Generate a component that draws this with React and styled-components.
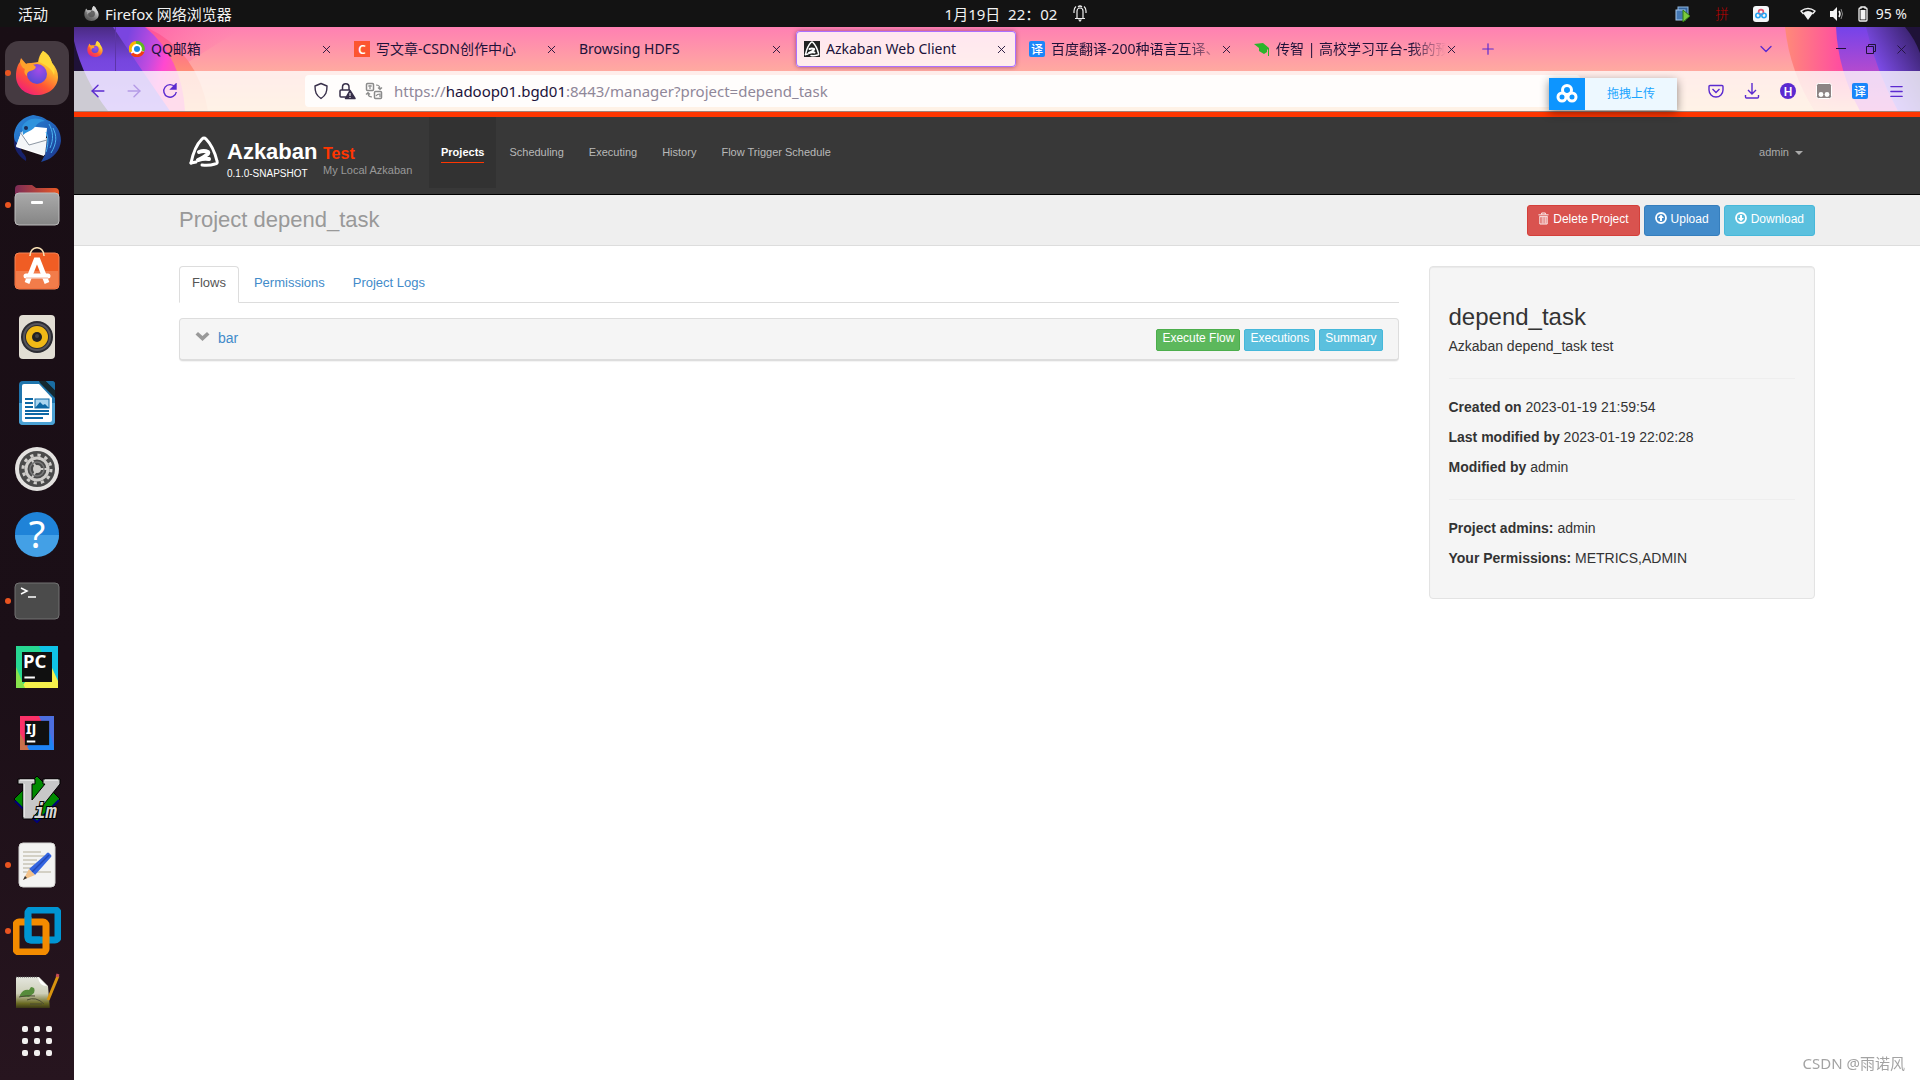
import React, { useState } from 'react';
import styled, { createGlobalStyle, css } from 'styled-components';
import {
  ArrowLeft, ArrowRight, ChevronDown, Menu, Plus, X,
} from 'lucide-react';

const GlobalStyle = createGlobalStyle`
  * { box-sizing: border-box; }
  body {
    margin: 0;
    background: #fff;
    color: #333;
    font-family: "Liberation Sans", Arial, "Noto Sans CJK SC", sans-serif;
    font-size: 14px;
    line-height: 20px;
  }
  button { font: inherit; color: inherit; border: 0; background: none; padding: 0; cursor: pointer; }
  a { text-decoration: none; }
  ul { list-style: none; margin: 0; padding: 0; }
  svg { display: block; flex: none; }
`;

const uiFont = css`
  font-family: "Noto Sans", "Noto Sans CJK SC", sans-serif;
`;

/* ---------- desktop ---------- */

const Desktop = styled.div`
  display: grid;
  grid-template: 27px 1fr / 74px 1fr;
  height: 100vh;
`;

const TopBar = styled.header`
  ${uiFont}
  grid-column: 1 / -1;
  display: flex;
  align-items: center;
  justify-content: space-between;
  background: #131313;
  color: #f2f2f2;
  font-size: 15px;
`;

const TopGroup = styled.div`
  display: flex;
  align-items: center;
  flex: 1 1 0;
  justify-content: ${(props) => (props.$end ? 'flex-end' : 'flex-start')};
  gap: ${(props) => props.$gap || 0}px;
  padding: 0 ${(props) => (props.$end ? 13 : 0)}px 0 ${(props) => (props.$end ? 0 : 18)}px;
`;

const TopButton = styled.button`
  display: flex;
  align-items: center;
  gap: ${(props) => props.$gap || 6}px;
  white-space: nowrap;
`;

const Clock = styled(TopButton)`
  margin-left: 107px;
`;

const Charge = styled(TopButton)`
  margin-left: 8px;
  font-size: 14px;
`;

const Tray = styled.div`
  display: flex;
  align-items: center;
  gap: 22px;
  margin-right: 31px;
`;

const Dock = styled.nav`
  display: flex;
  flex-direction: column;
  min-height: 0;
  padding-top: 14px;
  background: linear-gradient(#190e15, #1b0f17 60%, #27151f);
`;

const DockList = styled.ul`
  flex: 1;
  display: flex;
  flex-direction: column;
  align-items: center;
  gap: 2px;
  min-height: 0;
  overflow: hidden;
`;

const DockButton = styled.button`
  position: relative;
  display: grid;
  place-items: center;
  width: 64px;
  height: 64px;
  border-radius: 14px;
  background: ${(props) => (props.$active ? '#453a41' : 'none')};
`;

const RunningDot = styled.span`
  position: absolute;
  left: 0;
  top: 29px;
  width: 6px;
  height: 6px;
  border-radius: 50%;
  background: #e95420;
`;

const AppsButton = styled.button`
  display: grid;
  place-items: center;
  height: 72px;
  padding-bottom: 6px;
`;

/* ---------- browser chrome ---------- */

const Browser = styled.main`
  display: flex;
  flex-direction: column;
  min-width: 0;
`;

const Chrome = styled.div`
  ${uiFont}
  position: relative;
  z-index: 1;
  background: linear-gradient(#ff80b3, #ffaaa0 44px, #ffc58e 84px);
  color: #20123a;
`;

const Art = styled.svg`
  position: absolute;
  top: 0;
  ${(props) => (props.$right ? 'right: 0' : 'left: 0')};
`;

const TabStrip = styled.div`
  position: relative;
  display: flex;
  align-items: center;
  gap: 5px;
  height: 44px;
`;

const PinnedTab = styled.button`
  display: grid;
  place-items: center;
  width: 42px;
  height: 44px;
  border-right: 1px solid #5c35a8;
`;

const Tab = styled.div`
  display: flex;
  align-items: center;
  gap: 6px;
  flex: 0 1 220px;
  min-width: 0;
  height: 36px;
  padding: 0 8px;
  border-radius: 4px;
  font-size: 14px;
  ${(props) => props.$active && css`
    background: rgba(255, 255, 255, .8);
    box-shadow: 0 0 0 1px #ac70ff inset, 0 0 4px rgba(90, 30, 90, .6);
  `}
`;

const TabLabel = styled.button`
  flex: 1;
  min-width: 0;
  overflow: hidden;
  text-align: left;
  white-space: nowrap;
  ${(props) => props.$fade && css`
    margin-right: -8px;
    mask-image: linear-gradient(to right, #000 calc(100% - 36px), transparent);
  `}
`;

const IconButton = styled.button`
  display: grid;
  place-items: center;
  width: ${(props) => props.$w || 14}px;
  height: 24px;
  color: ${(props) => props.$color || '#20123a'};
`;

const WindowTools = styled.div`
  display: flex;
  align-items: center;
  margin-left: auto;
  padding-right: 4px;
`;

const WindowButtons = styled.div`
  display: flex;
  margin-left: 42px;
`;

const NavBar = styled.div`
  position: relative;
  display: flex;
  align-items: center;
  height: 41px;
  padding: 0 6px;
  background: rgba(255, 255, 255, .78);
  border-bottom: 1px solid #a08078;
`;

const UrlBox = styled.div`
  display: flex;
  align-items: center;
  gap: 9px;
  flex: 1;
  height: 32px;
  margin: 0 118px 0 117px;
  padding: 0 8px;
  border-radius: 4px;
  background: rgba(255, 255, 255, .85);
`;

const Url = styled.a`
  margin-left: 2px;
  font-size: 15px;
  color: #8f8799;
  b { font-weight: 400; color: #20123a; }
`;

const UploadWidget = styled.button`
  position: absolute;
  right: 243px;
  top: 51px;
  display: flex;
  align-items: center;
  width: 128px;
  height: 32px;
  background: #edf8ff;
  box-shadow: 0 3px 10px rgba(0, 0, 0, .45);
  color: #1aa5ff;
  font-size: 12px;
  span { flex: 1; text-align: center; }
`;

/* ---------- Azkaban page ---------- */

const Header = styled.header`
  display: flex;
  height: 83px;
  padding: 0 105px;
  border-top: 5px solid #ff3601;
  border-bottom: 1px solid #000;
  background: #383838;
`;

const Brand = styled.div`
  display: flex;
  gap: 7px;
  width: 250px;
  padding: 19px 0 0 9px;
`;

const BrandText = styled.div`
  display: grid;
  grid-template-columns: 88px auto;
  column-gap: 8px;
  align-content: start;
  color: #fff;
  white-space: nowrap;
  padding-top: 3px;
`;

const Name = styled.a`
  font-size: 22px;
  line-height: 26px;
  font-weight: 700;
  color: #fff;
`;

const Instance = styled.span`
  font-size: 16px;
  line-height: 29px;
  height: 26px;
  font-weight: 700;
  color: #ff3601;
`;

const Small = styled.span`
  font-size: ${(props) => (props.$muted ? 11 : 10)}px;
  line-height: ${(props) => (props.$muted ? 11 : 17)}px;
  color: ${(props) => (props.$muted ? '#999' : '#fff')};
`;

const Menubar = styled.nav`
  display: flex;
  align-items: flex-start;
  flex: 1;
  gap: 1px;
`;

const MenuItem = styled.a`
  height: 71px;
  padding: 27px 12px 0;
  font-size: 11px;
  line-height: 17px;
  color: #b8b8b8;
  span { display: block; height: 19px; }
  ${(props) => props.$active && css`
    background: #323232;
    color: #fff;
    font-weight: 700;
    span { border-bottom: 1px solid #ff3601; }
  `}
`;

const UserMenu = styled.button`
  display: flex;
  align-items: center;
  gap: 6px;
  margin: 27px 12px 0 auto;
  font-size: 11px;
  line-height: 17px;
  color: #aaa;
`;

const Caret = styled.i`
  border: 4px solid transparent;
  border-top-color: currentColor;
  border-bottom: 0;
`;

const TitleBar = styled.section`
  display: flex;
  justify-content: space-between;
  height: 51px;
  padding: 10px 105px 0;
  border-bottom: 1px solid #ddd;
  background: #efefef;
  h1 {
    margin: 0;
    font-size: 22px;
    line-height: 30px;
    font-weight: 400;
    color: #999;
  }
`;

const Actions = styled.div`
  display: flex;
  align-items: flex-start;
  gap: 4px;
`;

const tones = {
  danger: ['#d9534f', '#d43f3a'],
  primary: ['#428bca', '#357ebd'],
  info: ['#5bc0de', '#46b8da'],
  success: ['#5cb85c', '#4cae4c'],
};

const Button = styled.button`
  display: flex;
  align-items: flex-start;
  gap: 4px;
  height: ${(props) => (props.$small ? 22 : 31)}px;
  padding: ${(props) => (props.$small ? '0 5px' : '4px 10px')};
  border: 1px solid ${(props) => tones[props.$tone][1]};
  border-radius: ${(props) => (props.$small ? 2 : 3)}px;
  background: ${(props) => tones[props.$tone][0]};
  color: #fff;
  font-size: 12px;
  line-height: ${(props) => (props.$small ? 16 : 18)}px;
  white-space: nowrap;
  svg { margin-top: 2px; }
`;

const Row = styled.div`
  display: flex;
  padding: 20px 90px 0;
`;

const Column = styled.div`
  width: ${(props) => props.$width};
  padding: 0 15px;
`;

const PageTabs = styled.ul`
  display: flex;
  gap: 2px;
  height: 37px;
  margin-bottom: 15px;
  border-bottom: 1px solid #ddd;
`;

const PageTab = styled.a`
  display: block;
  height: 37px;
  padding: 6px 12px;
  border: 1px solid transparent;
  border-radius: 4px 4px 0 0;
  font-size: 13px;
  line-height: 19px;
  color: #428bca;
  ${(props) => props.$active && css`
    border-color: #ddd #ddd #fff;
    background: #fff;
    color: #555;
  `}
`;

const FlowPanel = styled.section`
  display: flex;
  justify-content: space-between;
  height: 43px;
  padding: 10px 15px;
  border: 1px solid #ddd;
  border-bottom-width: 2px;
  border-radius: 4px;
  background: #f5f5f5;
  box-shadow: 0 1px 1px rgba(0, 0, 0, .05);
`;

const FlowLink = styled.a`
  display: flex;
  gap: 8px;
  height: 18px;
  line-height: 18px;
  color: #428bca;
`;

const Well = styled.aside`
  padding: 36px 19px 20px;
  border: 1px solid #e3e3e3;
  border-radius: 4px;
  background: #f5f5f5;
  box-shadow: inset 0 1px 1px rgba(0, 0, 0, .05);
  h2 {
    margin: 0 0 6px;
    font-size: 24px;
    line-height: 27px;
    font-weight: 400;
  }
  p { margin: 0 0 10px; }
  hr {
    margin: 22px 0 18px;
    border: 0;
    border-top: 1px solid #eee;
  }
`;

const Watermark = styled.div`
  ${uiFont}
  position: fixed;
  right: 15px;
  bottom: 7px;
  font-size: 15px;
  color: #a3a3a3;
`;

/* ---------- drawings ---------- */

const GrayFilter = styled.span`
  filter: grayscale(1);
`;

function Firefox({ size }) {
  return (
    <svg width={size} height={size} viewBox="0 0 44 44">
      <defs>
        <linearGradient id="ffBody" x1=".85" y1="0" x2=".2" y2="1">
          <stop offset="0" stopColor="#fff44f" />
          <stop offset=".35" stopColor="#ffb02e" />
          <stop offset=".65" stopColor="#ff5634" />
          <stop offset="1" stopColor="#f0197f" />
        </linearGradient>
        <radialGradient id="ffGlobe" cx=".6" cy=".3" r=".7">
          <stop offset="0" stopColor="#a24be8" />
          <stop offset="1" stopColor="#5b4bd6" />
        </radialGradient>
      </defs>
      <path fill="url(#ffBody)" d="M28 0c7 4 8 9 9 12 4 4 6 9 6 14 0 10-9 18-21 18C10 44 1 36 1 25 1 18 3 13 5 11l1-4 5 6c2-1 3-1 5-1 3 0 5-1 7-1 1-5 2-8 5-11z" />
      <circle cx="22" cy="23" r="10" fill="url(#ffGlobe)" />
      <path fill="#ffa22b" d="M5 11l1-3 5 5c4-1 7 0 9 2 2 1 0 4-5 5-3 1-3 3-3 5-3-2-3-5-2-7-3-1-4-4-5-7z" />
      <path fill="#ffd83a" d="M24 11c1-5 2-8 4-11 7 4 8 9 9 12 3 3 3 9 2 12-1-3-3-6-6-8-3-2-6-4-9-5z" />
    </svg>
  );
}

function Thunderbird() {
  return (
    <svg width="48" height="48" viewBox="0 0 48 48">
      <defs>
        <linearGradient id="tb" x1="0" y1="0" x2="1" y2="1">
          <stop offset="0" stopColor="#2b87d8" />
          <stop offset=".5" stopColor="#2266bd" />
          <stop offset="1" stopColor="#1a2f86" />
        </linearGradient>
      </defs>
      <path fill="#17216a" d="M1 24c-1 9 4 17 12 22 1-3-1-6-4-9L3 20z" />
      <path fill="url(#tb)" d="M2 15C4 8 10 2 20 0c5 1 9 1 14 5 9 3 14 11 14 21-1 9-7 17-17 20l-3 1 4-7 2-18-8-8-16 4-6 10C1 26 0 21 2 15z" />
      <path fill="#fff" d="M8 18l6-7 20 2-3 28-28-9z" />
      <path fill="#f4f6f8" d="M8 18l8 12 18-7-2 17-29-9z" />
      <path fill="none" stroke="#8f99a5" d="M7 17l9 13 18-5" />
      <path fill="#2f93dd" d="M9 12C13 4 22 1 32 6c-5 0-8 3-11 7-3 3-8 4-11 7z" />
      <path fill="none" stroke="#4db4ef" d="M36 9c4 7 5 15 1 24M40 13c4 8 4 15-2 25M33 17c3 7 2 14 0 20" />
      <circle cx="13" cy="13" r="2" fill="#1b2b55" />
    </svg>
  );
}

function Files() {
  return (
    <svg width="48" height="48" viewBox="0 0 48 48">
      <defs>
        <linearGradient id="fl">
          <stop offset="0" stopColor="#7b2b56" />
          <stop offset="1" stopColor="#e95a25" />
        </linearGradient>
        <linearGradient id="fg" x2="0" y2="1">
          <stop offset="0" stopColor="#aaa" />
          <stop offset="1" stopColor="#858585" />
        </linearGradient>
      </defs>
      <path fill="url(#fl)" d="M2 8q0-4 4-4h13l4 3h19q4 0 4 4v12H2z" />
      <rect x="2" y="12" width="44" height="32" rx="4" fill="url(#fg)" stroke="#bdbdbd" />
      <rect x="18" y="20" width="12" height="3" rx="1" fill="#fff" />
    </svg>
  );
}

function Software() {
  return (
    <svg width="48" height="48" viewBox="0 0 48 48">
      <rect x="2" y="6" width="44" height="36" rx="4" fill="#f05d24" stroke="#f58456" />
      <path fill="#f27c4a" d="M3 24h42v14q0 3-3 3H6q-3 0-3-3z" />
      <path fill="none" stroke="#f7dfb4" strokeWidth="1.6" d="M17 9C17-2 31-2 31 9" />
      <path fill="none" stroke="#fff" strokeWidth="5" d="M14 36l9-23h2l9 23" />
      <path stroke="#fff" strokeWidth="5" strokeLinecap="round" d="M13 29h22" />
      <path stroke="#f0a080" strokeWidth=".8" d="M13 31h22" />
    </svg>
  );
}

function Music() {
  return (
    <svg width="48" height="48" viewBox="0 0 48 48">
      <rect x="6" y="2" width="36" height="44" rx="4" fill="#e2ded4" />
      <circle cx="24" cy="24" r="16" fill="#2b2b31" />
      <circle cx="24" cy="24" r="13" fill="none" stroke="#55555c" strokeWidth="2" />
      <circle cx="24" cy="24" r="11" fill="#f0b916" />
      <circle cx="24" cy="24" r="5" fill="#222" />
      <circle cx="24" cy="23" r="2" fill="#444" />
    </svg>
  );
}

function Writer() {
  return (
    <svg width="48" height="48" viewBox="0 0 48 48">
      <rect x="6" y="2" width="36" height="44" rx="4" fill="#1f75ad" />
      <path fill="#4ba2d4" d="M6 24h36v18q0 4-4 4H10q-4 0-4-4z" />
      <path fill="#fff" d="M9 7q0-2 2-2h15l13 14v22q0 2-2 2H11q-2 0-2-2z" />
      <path fill="#14272f" d="M26 2h7l9 9v8L27 4z" />
      <path fill="#1a6da3" d="M33 2h6q3 0 3 3v6z" />
      <path stroke="#0d68a5" strokeWidth="2" d="M12 20h8M12 24h8M12 28h8M12 32h24M12 35h24M12 39h18" />
      <rect x="22" y="20" width="14" height="9" fill="#a9d5f0" stroke="#0d68a5" />
      <path fill="#0d68a5" d="M22 29l5-6 3 3 2-1 4 4z" />
    </svg>
  );
}

function Settings() {
  return (
    <svg width="48" height="48" viewBox="0 0 48 48">
      <circle cx="24" cy="24" r="22" fill="#e4e2e0" />
      <circle cx="24" cy="24" r="18" fill="#4a4a4a" />
      <circle cx="24" cy="24" r="14" fill="none" stroke="#cfcdca" strokeWidth="3" strokeDasharray="3.3 4.03" />
      <circle cx="24" cy="24" r="11" fill="none" stroke="#cfcdca" strokeWidth="3" />
      <path stroke="#cfcdca" strokeWidth="2" d="M24 24h10M24 24l-5 9M24 24l-5-9" />
      <circle cx="24" cy="24" r="7" fill="none" stroke="#777" strokeWidth="1.5" />
      <circle cx="24" cy="24" r="4" fill="#cfcdca" />
    </svg>
  );
}

function Help() {
  return (
    <svg width="48" height="48" viewBox="0 0 48 48">
      <circle cx="24" cy="23" r="22" fill="#1f83d8" />
      <path fill="#43a0e6" d="M2 24a22 22 0 0 0 44 0z" />
      <text x="24" y="37" textAnchor="middle" fontFamily="Noto Sans" fontSize="38" fill="#fff">?</text>
    </svg>
  );
}

function Terminal() {
  return (
    <svg width="48" height="48" viewBox="0 0 48 48">
      <rect x="2" y="6" width="44" height="36" rx="4" fill="#4b4b4b" stroke="#737373" />
      <path fill="none" stroke="#fff" strokeWidth="1.5" d="M8 11l6 3-6 3M15 20h8" />
    </svg>
  );
}

function JetBrains({ label, colors, size }) {
  const o = 24 - size / 2;
  const end = 24 + size / 2;
  return (
    <svg width="48" height="48" viewBox="0 0 48 48">
      <rect x={o} y={o} width={size} height={size} fill={colors[0]} />
      <path fill={colors[1]} d={`M26 ${o}H${end}V${end}z`} />
      <path fill={colors[2]} d={`M${o + 4} ${end}L34 14L${end} 38V${end}z`} />
      <path fill={colors[3]} d={`M${o} 24l9 ${size / 2}h-9z`} />
      <rect x={o + size / 7} y={o + size / 7} width={size * 5 / 7} height={size * 5 / 7} fill="#101010" />
      <text x={o + size / 6} y="25" fontFamily="Noto Sans" fontWeight="700" fontSize={size * 0.44} fill="#fff">{label}</text>
      <path stroke="#fff" strokeWidth="2" d={`M${o + size / 5} ${24 + size / 4}h${size / 4}`} />
    </svg>
  );
}

function Vim() {
  return (
    <svg width="48" height="48" viewBox="0 0 48 48">
      <path fill="#008a00" stroke="#000" d="M24 1l23 23-23 23L1 24z" />
      <path stroke="#00007a" strokeWidth="2" fill="none" d="M2 26l22 21 22-22" />
      <path fill="#c8c8c8" stroke="#000" d="M5 4h17v5h-3v16L32 9h-2V4h17v5L19 44h-9V9H5z" />
      <path stroke="#fff" fill="none" d="M7 5h14M32 5h13M11 9v33" />
      <text x="21" y="43" fontFamily="DejaVu Sans Mono" fontStyle="italic" fontWeight="700" fontSize="19" fill="#d6d6d6" stroke="#000" strokeWidth="2" paintOrder="stroke">im</text>
    </svg>
  );
}

function TextEditor() {
  return (
    <svg width="48" height="48" viewBox="0 0 48 48">
      <rect x="6" y="2" width="36" height="44" rx="4" fill="#f3f3f2" stroke="#d6d6d4" />
      <path stroke="#c9c5b6" strokeWidth="1.5" d="M10 11h18M10 15h22M10 19h14M10 23h12M10 27h12M10 31h28" />
      <path fill="#3465e0" d="M31 15l3-3q1-1 2 0l2 2q1 1 0 2L22 34l-6-6z" />
      <path stroke="#2348b5" strokeWidth="1.5" d="M19 31l17-17" />
      <path fill="#f2c189" d="M16 28l6 6-12 5z" />
      <path fill="#333" d="M12 35l2 2-4 2z" />
    </svg>
  );
}

function Vmware() {
  return (
    <svg width="48" height="48" viewBox="0 0 48 48" fill="none" strokeWidth="7">
      <rect x="15" y="3" width="30" height="30" rx="3" stroke="#0095d3" />
      <rect x="3" y="15" width="30" height="30" rx="3" stroke="#f38b00" />
      <path stroke="#0095d3" d="M15 10v20q0 3 3 3h9" />
    </svg>
  );
}

function Notepadqq() {
  return (
    <svg width="48" height="48" viewBox="0 0 48 48">
      <defs>
        <linearGradient id="nq" x2="0" y2="1">
          <stop offset="0" stopColor="#e4e6de" />
          <stop offset=".5" stopColor="#cdceb8" />
          <stop offset=".8" stopColor="#6a6a22" />
          <stop offset="1" stopColor="#25200f" />
        </linearGradient>
      </defs>
      <path fill="url(#nq)" d="M3 4h23l9 9 2 24H3z" />
      <path stroke="#555" strokeDasharray="1 1" d="M3 4h22" />
      <path fill="#fff" d="M25 4l9 9q-8 0-9-9z" />
      <path fill="#568b3b" d="M7 22q3-6 9-5l2-3q5 0 3 6l-5 4H7z" />
      <path fill="none" stroke="#4b4b35" d="M6 24q7-2 16-1M14 27q9-4 17 4M17 31h12" />
      <path stroke="#d8940f" strokeWidth="3" d="M35 27L45 3" />
      <path stroke="#c64b55" strokeWidth="3" d="M44 4l1-3" />
    </svg>
  );
}

function AppsGrid() {
  return (
    <svg width="30" height="30" viewBox="0 0 30 30" fill="#f2f0ef">
      {[0, 12, 24].map((y) => [0, 12, 24].map((x) => (
        <rect key={`${x}-${y}`} x={x} y={y} width="6" height="6" rx="2" />
      )))}
    </svg>
  );
}

function CloudBadge() {
  return (
    <svg width="36" height="32" viewBox="0 0 36 32">
      <rect width="36" height="32" fill="#0d95ff" />
      <g fill="none" stroke="#fff" strokeWidth="3">
        <circle cx="18" cy="12" r="4.5" />
        <circle cx="13" cy="19" r="4" />
        <circle cx="23" cy="19" r="4" />
      </g>
    </svg>
  );
}

function CloudTray() {
  return (
    <svg width="16" height="16" viewBox="0 0 16 16">
      <rect width="16" height="16" rx="3" fill="#f4f6f8" />
      <g fill="none" strokeWidth="1.6">
        <circle cx="8" cy="6" r="2.4" stroke="#e4506a" />
        <circle cx="5" cy="9.5" r="2.2" stroke="#25a4f5" />
        <circle cx="11" cy="9.5" r="2.2" stroke="#25a4f5" />
      </g>
    </svg>
  );
}

function GlyphIcon({ label, bg, color = '#fff', size = 16, radius = 2, weight = 500 }) {
  return (
    <svg width={size} height={size} viewBox="0 0 16 16">
      <rect width="16" height="16" rx={radius} fill={bg} />
      <text x="8" y="12.5" textAnchor="middle" fontSize="12" fontWeight={weight} fontFamily="Noto Sans, Noto Sans CJK SC" fill={color}>{label}</text>
    </svg>
  );
}

function AzkabanMark({ size, bg }) {
  return (
    <svg width={size} height={size} viewBox="0 0 32 32" fill="none" stroke="#fff" strokeLinejoin="round" strokeLinecap="round">
      {bg && <rect width="32" height="32" fill="#222" stroke="none" />}
      <path strokeWidth="3" d="M3 27C5 17 9 8 14 3q2-2 4 0c5 5 9 14 11 22q1 3-2 3-6 2-13 1" />
      <path strokeWidth="3" d="M3 27l5-1" />
      <path strokeWidth="4" d="M11 16q5-2 9 0 2 2-10 8 6-2 11-1" />
    </svg>
  );
}

function QQMail() {
  return (
    <svg width="16" height="16" viewBox="0 0 16 16" fill="none" strokeWidth="3">
      <circle cx="8" cy="8" r="7" fill="#fff" stroke="none" />
      <path stroke="#f7b500" d="M2 11A6.500 6.500 0 0 1 7 1.500" />
      <path stroke="#5fb91e" d="M7 1.500A6.500 6.500 0 0 1 14 10" />
      <path stroke="#f23c12" d="M14 10.500A6.500 6.500 0 0 1 3 12.500" />
      <circle cx="8" cy="8" r="3" fill="#1a86e0" stroke="none" />
    </svg>
  );
}

function Cap() {
  return (
    <svg width="16" height="16" viewBox="0 0 16 16" fill="#2bb52b">
      <path d="M0 3l9-1 6 5v8h-1V9l-1-1v3l-3 2-5-3V7z" />
    </svg>
  );
}

function Reload() {
  return (
    <svg width="16" height="16" viewBox="0 0 16 16" fill="none" stroke="#5b2ad0" strokeWidth="1.4">
      <path d="M13 4A6.300 6.300 0 1 0 14.300 9" />
      <path fill="#5b2ad0" d="M14 1v5H9z" />
    </svg>
  );
}

function Shield() {
  return (
    <svg width="16" height="18" viewBox="0 0 16 18" fill="none" stroke="#38304a" strokeWidth="1.4">
      <path d="M8 1.500l6 2.500c0 6-1 9-6 12.500C3 13 2 10 2 4z" strokeLinejoin="round" />
    </svg>
  );
}

function Lock() {
  return (
    <svg width="18" height="18" viewBox="0 0 18 18" fill="none" stroke="#38304a" strokeWidth="1.5">
      <path d="M4.500 8V5a3 3 0 0 1 6.500 0v3M10 15H3q-1 0-1-1V9q0-1 1-1h9" />
      <path fill="#38304a" d="M12 8.500l5 8H7.500z" strokeLinejoin="round" />
      <path stroke="#fff" strokeWidth="1" d="M12 11v3M12 15v1" />
    </svg>
  );
}

function Translate() {
  return (
    <svg width="18" height="18" viewBox="0 0 18 18" fill="none" stroke="#8b8b8b" strokeWidth="1.5">
      <rect x="1.5" y="1.5" width="7" height="7" rx="1" />
      <rect x="9.5" y="9.5" width="7" height="7" rx="1" />
      <path d="M3 4h4M5 3v4M11 14q1-2 4-2v3M11 3q4 0 4 4M13 5.500l2 2 2-2M7 15q-4 0-4-4M1 12.500l2-2 2 2" strokeWidth="1.2" />
    </svg>
  );
}

function Pocket() {
  return (
    <svg width="16" height="16" viewBox="0 0 16 16" fill="none" stroke="#5b2ad0" strokeWidth="1.4">
      <path d="M2 2.500h12q1 0 1 1V7a7 7 0 0 1-14 0V3.500q0-1 1-1z" />
      <path d="M4.500 6L8 9.500 11.500 6" />
    </svg>
  );
}

function DownloadTray() {
  return (
    <svg width="16" height="16" viewBox="0 0 16 16" fill="none" stroke="#5b2ad0" strokeWidth="1.4">
      <path d="M8 0v11M4 7l4 4 4-4M1.500 12v2q0 1 1 1h11q1 0 1-1v-2" />
    </svg>
  );
}

function Monkey() {
  return (
    <svg width="16" height="16" viewBox="0 0 16 16">
      <rect x=".5" y=".5" width="15" height="15" rx="2" fill="#8d8585" stroke="#fff" />
      <circle cx="5" cy="11.5" r="2.4" fill="#fff" />
      <circle cx="11" cy="11.5" r="2.4" fill="#fff" />
    </svg>
  );
}

function Trash() {
  return (
    <svg width="11" height="13" viewBox="0 0 12 13" fill="none" stroke="#fff">
      <path d="M.5 2.500h11M4 2V.5h4V2M2 4.500v8h8v-8M1.500 4.500h9M4.500 5v7M6.500 5v7M8.500 5v7" />
    </svg>
  );
}

function CircleArrow({ down }) {
  return (
    <svg width="12" height="12" viewBox="0 0 12 12">
      <circle cx="6" cy="6" r="5" fill="none" stroke="#fff" strokeWidth="1.8" />
      <path fill="#fff" d={down ? 'M6 9.500l3-3.500H7V3H5v3H3z' : 'M6 2.500l3 3.500H7v3H5V6H3z'} />
    </svg>
  );
}

function FlowChevron() {
  return (
    <svg width="15" height="16" viewBox="0 0 15 16">
      <path fill="#999" d="M3 3l4.500 4L12 3l2.500 2.500-7 6.500-7-6.500z" />
    </svg>
  );
}

function Bell() {
  return (
    <svg width="14" height="17" viewBox="0 0 14 17" fill="none" stroke="#eee" strokeWidth="1.2">
      <path d="M4 13V6a3 3 0 0 1 6 0v7M2 13.500h10M1 8V6q0-3 2-4.500M13 8V6q0-3-2-4.500M5 2q2-2 4 0" />
      <path fill="#eee" stroke="none" d="M5 14.500h4L7 17z" />
    </svg>
  );
}

function Wifi() {
  return (
    <svg width="16" height="14" viewBox="0 0 16 14" fill="#f2f2f2">
      <path d="M3 6q5-4 10 0l-5 7z" />
      <path fill="none" stroke="#f2f2f2" strokeWidth="1.3" d="M3.500 7L1 4q7-5 14 0l-2.500 3" />
    </svg>
  );
}

function Volume() {
  return (
    <svg width="16" height="14" viewBox="0 0 16 14" fill="none" stroke="#f2f2f2">
      <path fill="#f2f2f2" stroke="none" d="M1 4h3l4-4v14l-4-4H1z" />
      <path d="M10 4q2 3 0 6" strokeWidth="1.5" />
      <path d="M12 2q3 5 0 10" stroke="#888" />
    </svg>
  );
}

function Battery() {
  return (
    <svg width="10" height="16" viewBox="0 0 10 16">
      <path fill="none" stroke="#f2f2f2" strokeWidth="1.3" d="M3 2V1h4v1h1q1 0 1 1v11q0 1-1 1H2q-1 0-1-1V3q0-1 1-1z" />
      <rect x="2.5" y="4" width="5" height="9.5" fill="#f2f2f2" />
    </svg>
  );
}

function Player() {
  return (
    <svg width="16" height="16" viewBox="0 0 16 16">
      <rect x="3" y="1" width="10" height="9" fill="#34659e" stroke="#8fb7e2" />
      <rect x="1" y="4" width="9" height="10" fill="#4478b4" stroke="#a5c8ee" />
      <path fill="#7bc93e" stroke="#2e7d10" d="M8 4l7 6-7 6z" />
    </svg>
  );
}

function Restore() {
  return (
    <svg width="12" height="12" viewBox="0 0 12 12" fill="none" stroke="#20123a">
      <path d="M1.500 3.500h7v7h-7zM3.500 3V1.500h7v7H9" />
    </svg>
  );
}

function Minimize() {
  return (
    <svg width="10" height="10" viewBox="0 0 10 10">
      <path stroke="#20123a" d="M0 4.500h10" />
    </svg>
  );
}

function ArtLeft() {
  return (
    <Art width="250" height="84" viewBox="0 0 250 84">
      <defs>
        <linearGradient id="al1" x2="0" y2="1">
          <stop offset="0" stopColor="#4b2b85" />
          <stop offset=".4" stopColor="#7646de" />
          <stop offset="1" stopColor="#8552ee" />
        </linearGradient>
        <linearGradient id="al2" x1="0" y1="0" x2="1" y2=".3">
          <stop offset=".3" stopColor="#7a45e0" />
          <stop offset=".62" stopColor="#c24be0" />
          <stop offset=".8" stopColor="#ff48d0" />
          <stop offset="1" stopColor="#ff5fa8" />
        </linearGradient>
        <linearGradient id="al3" x2="0" y2="1">
          <stop offset="0" stopColor="#ff4f9f" />
          <stop offset=".5" stopColor="#ff8a78" />
          <stop offset="1" stopColor="#ffb27c" />
        </linearGradient>
        <linearGradient id="al4">
          <stop offset="0" stopColor="#ff4f9f" stopOpacity=".7" />
          <stop offset="1" stopColor="#ff7fb2" stopOpacity="0" />
        </linearGradient>
      </defs>
      <path fill="url(#al4)" d="M60 0h110L100 44z" />
      <path fill="url(#al3)" d="M60 0h12Q124 24 134 84H80z" />
      <path fill="url(#al2)" d="M30 0h41Q108 30 111 84H60z" />
      <path fill="url(#al1)" d="M0 0h39Q60 32 96 84H0z" />
      <path fill="#1f1238" d="M0 14Q9 52 34 84H0z" />
    </Art>
  );
}

function ArtRight() {
  return (
    <Art $right width="250" height="84" viewBox="-70 0 250 84">
      <defs>
        <linearGradient id="ar1">
          <stop offset="0" stopColor="#ff8a78" />
          <stop offset=".4" stopColor="#ff4f9f" />
          <stop offset="1" stopColor="#ff4f9f" />
        </linearGradient>
        <linearGradient id="ar2" x2="0" y2="1">
          <stop offset="0" stopColor="#7443ea" />
          <stop offset=".5" stopColor="#b04ad0" />
          <stop offset="1" stopColor="#e04fc0" />
        </linearGradient>
        <linearGradient id="ar3" x1=".9" y1="0" x2=".2" y2=".6">
          <stop offset=".1" stopColor="#3c2472" />
          <stop offset="1" stopColor="#8450f5" />
        </linearGradient>
        <linearGradient id="ar4" x2="0" y2="1">
          <stop offset=".5" stopColor="#ffc08c" stopOpacity="0" />
          <stop offset="1" stopColor="#ffc08c" stopOpacity=".8" />
        </linearGradient>
      </defs>
      <path fill="url(#ar1)" d="M45 0Q50 46 75 84h105V0z" />
      <path fill="url(#ar4)" d="M45 0Q50 46 75 84h105V0z" />
      <path fill="url(#ar2)" d="M96 0Q98 44 120 84h60V0z" />
      <path fill="url(#ar3)" d="M126 0Q136 44 158 84h22V0z" />
      <path fill="#1f1238" d="M165 0q10 12 15 26V0z" />
    </Art>
  );
}

/* ---------- data ---------- */

const dockApps = [
  { name: 'Firefox', icon: <Firefox size={44} />, running: true, active: true },
  { name: 'Thunderbird', icon: <Thunderbird /> },
  { name: 'Files', icon: <Files />, running: true },
  { name: 'Software', icon: <Software /> },
  { name: 'Rhythmbox', icon: <Music /> },
  { name: 'LibreOffice Writer', icon: <Writer /> },
  { name: 'Settings', icon: <Settings /> },
  { name: 'Help', icon: <Help /> },
  { name: 'Terminal', icon: <Terminal />, running: true },
  { name: 'PyCharm', icon: <JetBrains label="PC" size={42} colors={['#27d792', '#0fc3e8', '#f5f04b', '#86e24c']} /> },
  { name: 'IntelliJ IDEA', icon: <JetBrains label="IJ" size={34} colors={['#fb3168', '#4d6fe0', '#1f84f5', '#c9704c']} /> },
  { name: 'Vim', icon: <Vim /> },
  { name: 'Text Editor', icon: <TextEditor />, running: true },
  { name: 'VMware', icon: <Vmware />, running: true },
  { name: 'Notepadqq', icon: <Notepadqq /> },
];

const browserTabs = [
  { title: 'QQ邮箱', icon: <QQMail /> },
  { title: '写文章-CSDN创作中心', icon: <GlyphIcon label="C" bg="#fc5531" radius={0} weight={600} /> },
  { title: 'Browsing HDFS' },
  { title: 'Azkaban Web Client', icon: <AzkabanMark size={16} bg />, active: true },
  { title: '百度翻译-200种语言互译、', icon: <GlyphIcon label="译" bg="#1a86fa" />, fade: true },
  { title: '传智 | 高校学习平台-我的预', icon: <Cap />, fade: true },
];

const menu = ['Projects', 'Scheduling', 'Executing', 'History', 'Flow Trigger Schedule'];
const pageTabs = ['Flows', 'Permissions', 'Project Logs'];

export default function App() {
  const [tab, setTab] = useState('Flows');

  return (
    <Desktop>
      <GlobalStyle />

      <TopBar>
        <TopGroup $gap={36}>
          <TopButton type="button">活动</TopButton>
          <TopButton type="button">
            <GrayFilter><Firefox size={15} /></GrayFilter>
            Firefox 网络浏览器
          </TopButton>
        </TopGroup>
        <Clock type="button" $gap={16}>
          1月19日&nbsp; 22：02
          <Bell />
        </Clock>
        <TopGroup $end>
          <Tray>
            <Player />
            <GlyphIcon label="拼" bg="none" color="#c00000" size={18} weight={300} />
            <CloudTray />
          </Tray>
          <TopButton type="button" aria-label="System menu" $gap={13}>
            <Wifi />
            <Volume />
            <Battery />
          </TopButton>
          <Charge type="button">95 %</Charge>
        </TopGroup>
      </TopBar>

      <Dock>
        <DockList>
          {dockApps.map((app) => (
            <li key={app.name}>
              <DockButton type="button" aria-label={app.name} $active={app.active}>
                {app.running && <RunningDot />}
                {app.icon}
              </DockButton>
            </li>
          ))}
        </DockList>
        <AppsButton type="button" aria-label="Show applications"><AppsGrid /></AppsButton>
      </Dock>

      <Browser>
        <Chrome>
          <ArtLeft />
          <ArtRight />
          <TabStrip>
            <PinnedTab type="button" aria-label="Firefox View"><Firefox size={16} /></PinnedTab>
            {browserTabs.map((t) => (
              <Tab key={t.title} $active={t.active}>
                {t.icon}
                <TabLabel type="button" $fade={t.fade}>{t.title}</TabLabel>
                <IconButton type="button" aria-label="Close tab"><X size={13} strokeWidth={1.7} /></IconButton>
              </Tab>
            ))}
            <IconButton type="button" aria-label="New tab" $w={34} $color="#5b2ad0"><Plus size={18} strokeWidth={1.6} /></IconButton>
            <WindowTools>
              <IconButton type="button" aria-label="List all tabs" $w={36} $color="#5b2ad0"><ChevronDown size={20} strokeWidth={1.6} /></IconButton>
              <WindowButtons>
                <IconButton type="button" aria-label="Minimize" $w={30}><Minimize /></IconButton>
                <IconButton type="button" aria-label="Restore" $w={30}><Restore /></IconButton>
                <IconButton type="button" aria-label="Close" $w={30}><X size={15} strokeWidth={1.4} /></IconButton>
              </WindowButtons>
            </WindowTools>
          </TabStrip>

          <NavBar>
            <IconButton type="button" aria-label="Back" $w={36} $color="#5b2ad0"><ArrowLeft size={20} strokeWidth={1.7} /></IconButton>
            <IconButton type="button" aria-label="Forward" $w={36} $color="#b49ae6"><ArrowRight size={20} strokeWidth={1.7} /></IconButton>
            <IconButton type="button" aria-label="Reload" $w={36}><Reload /></IconButton>
            <UrlBox>
              <Shield />
              <Lock />
              <Translate />
              <Url href="#url">
                https://
                <b>hadoop01.bgd01</b>
                :8443/manager?project=depend_task
              </Url>
            </UrlBox>
            <IconButton type="button" aria-label="Pocket" $w={36}><Pocket /></IconButton>
            <IconButton type="button" aria-label="Downloads" $w={36}><DownloadTray /></IconButton>
            <IconButton type="button" aria-label="Account" $w={36}><GlyphIcon label="H" bg="#5b2ad0" radius={8} weight={600} /></IconButton>
            <IconButton type="button" aria-label="Tampermonkey" $w={36}><Monkey /></IconButton>
            <IconButton type="button" aria-label="Translate" $w={36}><GlyphIcon label="译" bg="#1a86fa" /></IconButton>
            <IconButton type="button" aria-label="Menu" $w={36} $color="#5b2ad0"><Menu size={17} strokeWidth={1.8} /></IconButton>
          </NavBar>

          <UploadWidget type="button">
            <CloudBadge />
            <span>拖拽上传</span>
          </UploadWidget>
        </Chrome>

        <Header>
          <Brand>
            <AzkabanMark size={32} />
            <BrandText>
              <Name href="#home">Azkaban</Name>
              <Instance>Test</Instance>
              <Small>0.1.0-SNAPSHOT</Small>
              <Small $muted>My Local Azkaban</Small>
            </BrandText>
          </Brand>
          <Menubar>
            {menu.map((item) => (
              <MenuItem key={item} href="#menu" $active={item === 'Projects'}><span>{item}</span></MenuItem>
            ))}
            <UserMenu type="button">
              admin
              <Caret />
            </UserMenu>
          </Menubar>
        </Header>

        <TitleBar>
          <h1>Project depend_task</h1>
          <Actions>
            <Button type="button" $tone="danger">
              <Trash />
              Delete Project
            </Button>
            <Button type="button" $tone="primary">
              <CircleArrow />
              Upload
            </Button>
            <Button type="button" $tone="info">
              <CircleArrow down />
              Download
            </Button>
          </Actions>
        </TitleBar>

        <Row>
          <Column $width="75%">
            <PageTabs>
              {pageTabs.map((name) => (
                <li key={name}>
                  <PageTab href="#tab" $active={tab === name} onClick={() => setTab(name)}>{name}</PageTab>
                </li>
              ))}
            </PageTabs>
            <FlowPanel>
              <FlowLink href="#bar">
                <FlowChevron />
                bar
              </FlowLink>
              <Actions>
                <Button type="button" $small $tone="success">Execute Flow</Button>
                <Button type="button" $small $tone="info">Executions</Button>
                <Button type="button" $small $tone="info">Summary</Button>
              </Actions>
            </FlowPanel>
          </Column>
          <Column $width="25%">
            <Well>
              <h2>depend_task</h2>
              <p>Azkaban depend_task test</p>
              <hr />
              <p><strong>Created on</strong> 2023-01-19 21:59:54</p>
              <p><strong>Last modified by</strong> 2023-01-19 22:02:28</p>
              <p><strong>Modified by</strong> admin</p>
              <hr />
              <p><strong>Project admins:</strong> admin</p>
              <p><strong>Your Permissions:</strong> METRICS,ADMIN</p>
            </Well>
          </Column>
        </Row>
      </Browser>

      <Watermark>CSDN @雨诺风</Watermark>
    </Desktop>
  );
}
